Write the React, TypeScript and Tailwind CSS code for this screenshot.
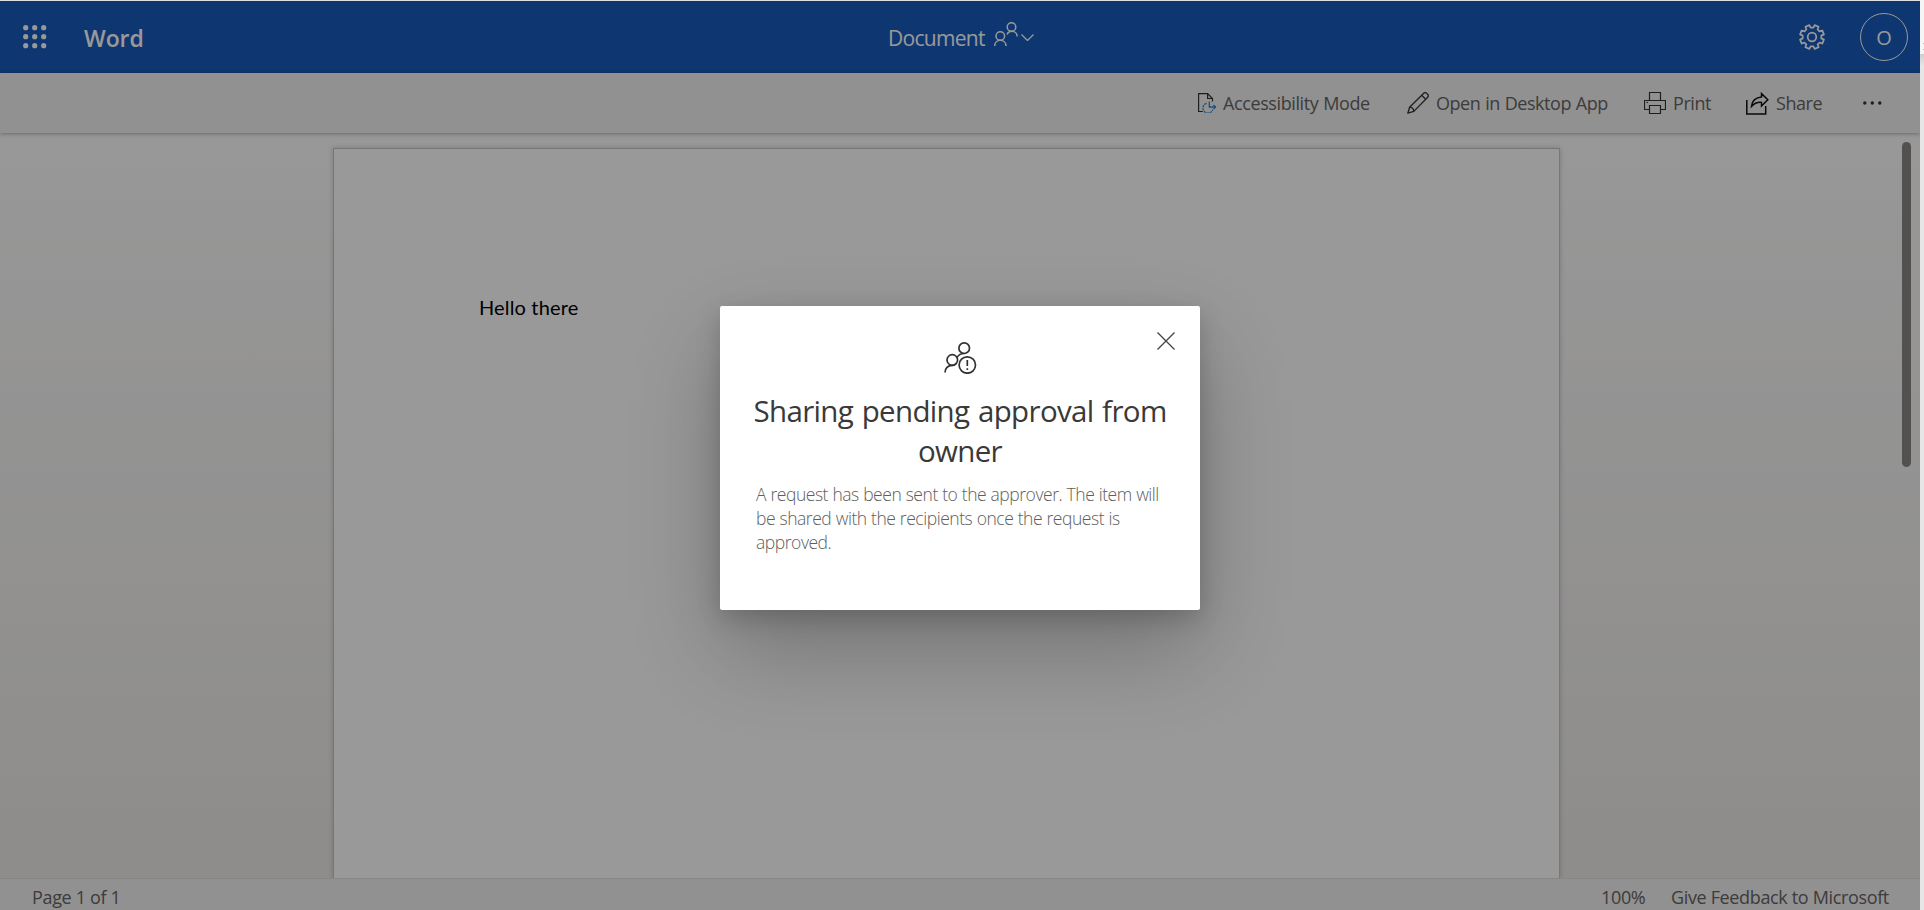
import React from 'react';

const APPROVAL_TEXT =
  'A request has been sent to the approver. The item will be shared with the recipients once the request is approved.';

function Waffle() {
  const steps = [2.7, 11.7, 20.7];
  return (
    <svg className="block h-6 w-6" viewBox="0 0 24 24" fill="#fff">
      {steps.map((y) => steps.map((x) => <circle key={`${x}-${y}`} cx={x} cy={y} r="2.6" />))}
    </svg>
  );
}

function PeopleIcon() {
  return (
    <svg className="block h-6 w-6" viewBox="0 0 24 24" fill="none" stroke="#fff" strokeWidth="1.5">
      <circle cx="6.3" cy="14" r="4.3" />
      <path d="M.7 24c0-3.2 2.2-5.7 5.6-5.7s5.7 2.5 5.7 5.7" />
      <circle cx="17.5" cy="5" r="4.3" />
      <path d="M13 12.5c.8-2 2.2-3.2 4.5-3.2 3.5 0 5.7 2.3 5.7 5.2" />
    </svg>
  );
}

function GearIcon() {
  const teeth = [0, 45, 90, 135, 180, 225, 270, 315];
  const pts: string[] = [];
  teeth.forEach((a) => {
    [
      [a - 10, 12.2],
      [a + 10, 12.2],
      [a + 14, 9.4],
      [a + 31, 9.4],
    ].forEach(([deg, r]) => {
      const t = ((deg + 22.5) * Math.PI) / 180;
      pts.push(`${(13 + r * Math.sin(t)).toFixed(2)},${(13 - r * Math.cos(t)).toFixed(2)}`);
    });
  });
  return (
    <svg className="block h-[26px] w-[26px]" viewBox="0 0 26 26" fill="none" stroke="#fff" strokeWidth="1.7" strokeLinejoin="round">
      <polygon points={pts.join(' ')} />
      <circle cx="13" cy="13" r="4.3" />
    </svg>
  );
}

function AccessibilityIcon() {
  return (
    <svg className="block h-5 w-[18px]" viewBox="0 0 18 20" fill="none" stroke="#333" strokeWidth="1.2">
      <path d="M4.8 18.5H.6V.6h9l4.9 4.9v3M9.6.6v4.9h4.9" />
      <g stroke="#2b88d8" strokeWidth="1.3">
        <path d="M8.5 10.3a5 5 0 1 0 6.2 6.2" strokeDasharray="2.4 .8" />
        <path d="M11.3 8.5v5.5h6.3" />
        <path d="M15.5 12l2 2-2 2" />
      </g>
    </svg>
  );
}

function PencilIcon() {
  return (
    <svg className="block h-[22px] w-[22px]" viewBox="0 0 22 22" fill="none" stroke="#333" strokeWidth="1.3" strokeLinejoin="round">
      <path d="M.8 21.2l1.800-6L16.500 1.500c1-1 2.300-1 3.200-.1l.9.900c.9.900.9 2.200-.1 3.200L6.800 19.400z" />
      <path d="M2.600 15.200c2.200.1 4 2 4.200 4.200M14.700 3.300l4 4" />
    </svg>
  );
}

function PrintIcon() {
  return (
    <svg className="block h-[22px] w-[22px]" viewBox="0 0 22 22" fill="none" stroke="#333" strokeWidth="1.2">
      <path d="M5.5 8.5v-8h11v8M5.5 17.5h-5v-9h21v9h-5" />
      <path d="M5.5 13.5h11v8h-11z" />
      <path d="M2.5 10.5h1.5" />
    </svg>
  );
}

function ShareIcon() {
  return (
    <svg className="block h-[23px] w-[23px]" viewBox="0 0 23 23" fill="none" stroke="#111" strokeWidth="1.5">
      <path d="M.8 8v14h18.900v-8" />
      <path d="M15.500 1.600l6.300 6.200-6.300 6.200v-3.600c-4.300-.3-7.300.9-10 4C5.700 9.200 9.500 5.300 15.500 4.900z" />
    </svg>
  );
}

function PendingIcon() {
  return (
    <svg className="block h-8 w-[33px]" viewBox="0 0 33 32" fill="none" stroke="#323130" strokeWidth="1.7">
      <circle cx="20.2" cy="6.2" r="5.3" />
      <circle cx="8.3" cy="18" r="5.3" />
      <path d="M1 30.500c0-4 2.800-7.200 7.300-7.200 2 0 3.200-.8 4.200-2.300M12.700 16.200c1.200-2.600 3.800-4.700 7.500-4.700" />
      <circle cx="23.3" cy="23" r="8.2" />
      <path d="M23.3 18v6M23.3 26.2v1.8" />
    </svg>
  );
}

function Header() {
  return (
    <header className="flex h-[72px] shrink-0 items-center bg-[#185abd] text-white">
      <div className="mb-px ml-[23px]"><Waffle /></div>
      <span className="ml-[37px] mt-[2px] w-[60px] whitespace-nowrap text-[23px] font-semibold leading-8 tracking-[-0.1px]">Word</span>
      <div className="ml-[744px] flex w-[148px] items-center whitespace-nowrap">
        <span className="mt-[2px] w-[106px] text-[21px] leading-8 tracking-[-0.7px]">Document</span>
        <span className="-mt-[6px]"><PeopleIcon /></span>
        <svg className="ml-[3px] mt-px block h-[7px] w-[13px] shrink-0" viewBox="0 0 13 7" fill="none" stroke="#fff" strokeWidth="1.3">
          <path d="M.5.5l6 6 6-6" />
        </svg>
      </div>
      <div className="ml-auto flex items-center">
        <GearIcon />
        <div className="ml-[35px] mr-3 flex h-12 w-12 items-center justify-center rounded-full border border-white text-[20px] leading-8">
          <span className="mt-[2px]">O</span>
        </div>
      </div>
    </header>
  );
}

function Toolbar() {
  return (
    <div className="relative flex h-[60px] shrink-0 items-center whitespace-nowrap bg-[#f2f2f2] pl-[1198px] text-[18px] leading-6 tracking-[-0.45px] text-[#666462] shadow-[0_1px_4px_rgba(0,0,0,0.3)] [word-spacing:0.6px]">
      <div className="flex w-[209px] items-center">
        <AccessibilityIcon />
        <span className="ml-[7px] tracking-[-0.4px]">Accessibility Mode</span>
      </div>
      <div className="flex w-[237px] items-center">
        <PencilIcon />
        <span className="ml-[7px]">Open in Desktop App</span>
      </div>
      <div className="flex w-[102px] items-center">
        <PrintIcon />
        <span className="ml-[7px]">Print</span>
      </div>
      <div className="flex w-[117px] items-center">
        <ShareIcon />
        <span className="ml-[7px]">Share</span>
      </div>
      <svg className="block h-1 w-[19px]" viewBox="0 0 19 4" fill="#333">
        <circle cx="1.8" cy="2" r="1.7" />
        <circle cx="9.3" cy="2" r="1.7" />
        <circle cx="16.8" cy="2" r="1.7" />
      </svg>
    </div>
  );
}

function Dialog() {
  return (
    <div className="absolute inset-0 flex items-start justify-center bg-black/40 pt-[305px]">
      <div className="relative flex h-[304px] w-[480px] flex-col items-center rounded-[2px] bg-white shadow-[0_40px_90px_rgba(0,0,0,0.24),0_8px_24px_rgba(0,0,0,0.18)]">
        <svg className="absolute right-[25.5px] top-[26px] h-[18px] w-[18px]" viewBox="0 0 18 18" stroke="#444" strokeWidth="1.3">
          <path d="M.5.5l17 17M17.5.5l-17 17" />
        </svg>
        <div className="mt-9"><PendingIcon /></div>
        <h1 className="mt-[17px] w-[430px] text-center text-[29.5px] leading-10 tracking-[-0.65px] text-[#3a3938] [word-spacing:1.5px]">
          Sharing pending approval from owner
        </h1>
        <p className="mt-[11px] w-[408px] text-[17.5px] font-light leading-6 tracking-[-0.46px] text-[#605e5c] [word-spacing:0.3px]">
          {APPROVAL_TEXT}
        </p>
      </div>
    </div>
  );
}

export default function App() {
  return (
    <div className="flex h-[910px] w-[1924px] overflow-hidden bg-[#e6e6e6] font-['Open_Sans','Noto_Sans',sans-serif]">
      <div className="flex w-[1920px] flex-col">
        <div className="h-px shrink-0 bg-[#d9dfe2]" />
        <div className="relative flex min-h-0 flex-1 flex-col overflow-hidden">
          <Header />
          <Toolbar />
          <main className="flex min-h-0 flex-1 bg-linear-to-b from-[#fdfdfd] to-[#edebe8]">
            <div className="ml-[333px] mt-[15px] w-[1227px] border border-b-0 border-[#c8c6c4] bg-white shadow-[0_0_5px_rgba(0,0,0,0.2)]">
              <p className="ml-[145px] mt-[144px] font-['Lato','Open_Sans',sans-serif] text-[20px] leading-7 tracking-[0.15px] text-black">Hello there</p>
            </div>
            <div className="ml-[342px] mt-[9px] h-[325px] w-[9px] rounded-full bg-[#8a8886]" />
          </main>
          <footer className="flex h-8 shrink-0 items-center whitespace-nowrap border-t border-[#e1dfdd] bg-[#f2f2f2] pl-8 pt-[5px] text-[18px] leading-6 tracking-[-0.35px] text-[#666462]">
            <span>Page 1 of 1</span>
            <span className="ml-auto w-[70px]">100%</span>
            <span className="w-[249px]">Give Feedback to Microsoft</span>
          </footer>
          <Dialog />
        </div>
      </div>
      <div className="flex w-1 flex-col">
        <div className="flex h-[54px] flex-col items-end bg-[#f5f5f5] pt-[43px]">
          <div className="h-px w-px bg-[#bdbdbd]" />
          <div className="mt-[5px] h-px w-px bg-[#bdbdbd]" />
        </div>
        <div className="flex-1 bg-linear-to-b from-[#cfcfcf] to-[#e6e6e6] to-[12px]" />
      </div>
    </div>
  );
}
